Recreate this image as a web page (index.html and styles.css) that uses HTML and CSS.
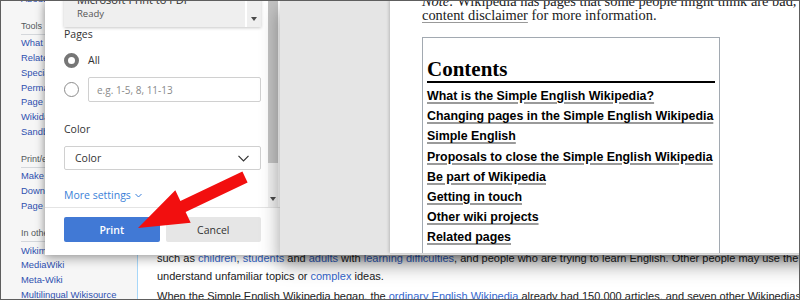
FILE: index.html
```html
<!DOCTYPE html>
<html>
<head>
  <meta charset="utf-8" />
  <title>Print - Simple English Wikipedia</title>
  <link rel="stylesheet" href="styles.css">
</head>
<body>
<div class="frame">

  <div class="wiki">
    <div class="sidebar">
      <ul class="portal-links first">
        <li><a>About Wikipedia</a></li>
      </ul>
      <div class="portal">
        <h3>Tools</h3>
        <ul class="portal-links">
          <li><a>What links here</a></li>
          <li><a>Related changes</a></li>
          <li><a>Special pages</a></li>
          <li><a>Permanent link</a></li>
          <li><a>Page information</a></li>
          <li><a>Wikidata item</a></li>
          <li><a>Sandbox</a></li>
        </ul>
      </div>
      <div class="portal">
        <h3>Print/export</h3>
        <ul class="portal-links">
          <li><a>Make a book</a></li>
          <li><a>Download as PDF</a></li>
          <li><a>Page for printing</a></li>
        </ul>
      </div>
      <div class="portal">
        <h3>In other projects</h3>
        <ul class="portal-links">
          <li><a>Wikimedia Commons</a></li>
          <li><a>MediaWiki</a></li>
          <li><a>Meta-Wiki</a></li>
          <li><a>Multilingual Wikisource</a></li>
        </ul>
      </div>
    </div>

    <div class="content">
      <p>such as <a>children</a>, <a>students</a> and <a>adults</a> with <a>learning difficulties</a>, and people who are trying to learn English. Other people may use the Simple English Wikipedia to<br>
      understand unfamiliar topics or <a>complex</a> ideas.</p>
      <p>When the Simple English Wikipedia began, the <a class="u">ordinary English Wikipedia</a> already had 150,000 articles, and seven other Wikipedias had over 15,000 articles.</p>
    </div>
  </div>

  <div class="print-dialog">
    <div class="settings">
      <div class="settings-scroll">
        <div class="settings-body">
          <div class="printer">
            <div class="printer-info">
              <div class="printer-name">Microsoft Print to PDF</div>
              <div class="printer-status">Ready</div>
            </div>
            <div class="printer-strip"></div>
            <div class="printer-scroll"><span class="arrow-down"></span></div>
          </div>

          <div class="label">Pages</div>
          <div class="radio-row">
            <span class="radio checked"></span>
            <span>All</span>
          </div>
          <div class="radio-row range">
            <span class="radio"></span>
            <input class="range-input" type="text" placeholder="e.g. 1-5, 8, 11-13">
          </div>

          <div class="label color-label">Color</div>
          <div class="select">
            <span>Color</span>
            <svg width="11" height="7" viewBox="0 0 11 7"><polyline points="0.5,0.8 5.5,5.8 10.5,0.8" fill="none" stroke="#333" stroke-width="1.2"/></svg>
          </div>

          <div class="more-settings">More settings
            <svg width="7" height="5" viewBox="0 0 7 5"><polyline points="0.5,1 3.5,4 6.5,1" fill="none" stroke="#3a7fd8" stroke-width="1"/></svg>
          </div>
        </div>
        <div class="scrollbar">
          <div class="scroll-thumb"></div>
          <div class="scroll-track"></div>
          <div class="scroll-button"><span class="arrow-down"></span></div>
        </div>
      </div>
      <div class="settings-footer">
        <button class="btn btn-print" type="button">Print</button>
        <button class="btn btn-cancel" type="button">Cancel</button>
      </div>
    </div>

    <div class="preview">
      <div class="paper">
        <p class="note"><i>Note:</i> Wikipedia has pages that some people might think are bad, see the<br>
        <span class="u">content disclaimer</span> for more information.</p>
        <div class="toc">
          <h2>Contents</h2>
          <ul>
            <li><span>What is the Simple English Wikipedia?</span></li>
            <li><span>Changing pages in the Simple English Wikipedia</span></li>
            <li><span>Simple English</span></li>
            <li><span>Proposals to close the Simple English Wikipedia</span></li>
            <li><span>Be part of Wikipedia</span></li>
            <li><span>Getting in touch</span></li>
            <li><span>Other wiki projects</span></li>
            <li><span>Related pages</span></li>
          </ul>
        </div>
      </div>
    </div>
  </div>

  <svg class="pointer" width="800" height="300" viewBox="0 0 800 300">
    <polygon points="242.4,171.6 180.4,201.1 175.3,190.3 138,228 190.7,222.8 185.6,211.9 247.6,182.4" fill="#f20f0f"/>
  </svg>

</div>
</body>
</html>
```

FILE: styles.css
```css
* {
  box-sizing: border-box;
}
html, body {
  margin: 0;
  padding: 0;
}
body {
  width: 800px;
  height: 300px;
  overflow: hidden;
  background: #fff;
}
.frame {
  position: relative;
  width: 800px;
  height: 300px;
  overflow: hidden;
  font-family: "Liberation Sans", Arial, sans-serif;
}
.frame::after {
  content: "";
  position: absolute;
  top: 0;
  left: 0;
  right: 0;
  bottom: 0;
  border: 1px solid #5e5e5e;
  pointer-events: none;
}

/* wiki page behind the dialog */
.wiki {
  display: flex;
  height: 100%;
}
.sidebar {
  width: 137px;
  flex: none;
  background: #f6f6f6;
  padding-left: 21px;
  font-size: 9.4px;
  overflow: hidden;
}
.portal-links {
  list-style: none;
  margin: 0;
  padding: 0;
}
.portal-links li {
  line-height: 14.7px;
  white-space: nowrap;
}
.portal-links a {
  color: #2f51b0;
}
.first {
  margin-top: -8.35px;
}
.portal {
  margin-top: 12.6px;
}
.portal h3 {
  margin: 0 0 1.5px 0;
  font-size: 9px;
  font-weight: normal;
  line-height: 14px;
  color: #54595d;
  padding-bottom: 1px;
  border-bottom: 1px solid #d4d7db;
  white-space: nowrap;
}
.content {
  flex: 1;
  border-left: 1px solid #a7d7f9;
  background: #fff;
  padding: 249.4px 0 0 19px;
  font-size: 11px;
  line-height: 18px;
  color: #202122;
  white-space: nowrap;
  overflow: hidden;
}
.content p {
  margin: 0 0 2px 0;
}
.content a {
  color: #3366cc;
}

/* print dialog */
.print-dialog {
  position: absolute;
  left: 45px;
  top: 0;
  right: 0;
  height: 255px;
  display: flex;
  box-shadow: 0 4px 10px rgba(0, 0, 0, 0.3), -2px 0 5px rgba(0, 0, 0, 0.12);
  font-family: "Open Sans", "Noto Sans", sans-serif;
  color: #2b2b2b;
}
.settings {
  width: 235px;
  flex: none;
  background: #fff;
  display: flex;
  flex-direction: column;
}
.settings-scroll {
  flex: 1;
  display: flex;
  min-height: 0;
}
.settings-body {
  flex: 1;
  padding: 0 7px 0 19px;
}
.printer {
  margin-top: -14px;
  height: 41px;
  background: #efefef;
  box-shadow: 0 1px 3px rgba(0, 0, 0, 0.22);
  display: flex;
}
.printer-info {
  flex: 1;
  padding: 6px 0 0 13px;
  white-space: nowrap;
}
.printer-name {
  font-size: 11px;
  line-height: 15px;
}
.printer-status {
  font-size: 9.5px;
  line-height: 13px;
  color: #555;
}
.printer-strip {
  width: 2px;
  background: #fff;
}
.printer-scroll {
  width: 14px;
  display: flex;
  align-items: flex-end;
  justify-content: center;
  padding-bottom: 6px;
}
.arrow-down {
  width: 0;
  height: 0;
  border-left: 3.5px solid transparent;
  border-right: 3.5px solid transparent;
  border-top: 4px solid #4a4a4a;
}
.label {
  font-size: 10.5px;
  line-height: 14px;
  color: #333;
}
.radio-row {
  display: flex;
  align-items: center;
  gap: 9px;
  height: 20px;
  margin-top: 9px;
  font-size: 10.5px;
  color: #333;
}
.radio-row.range {
  height: 25px;
  margin-top: 7px;
}
.radio {
  width: 15px;
  height: 15px;
  flex: none;
  border-radius: 50%;
  border: 1px solid #8c8c8c;
  background: #fff;
}
.radio.checked {
  border: 4px solid #767676;
}
.range-input {
  flex: 1;
  min-width: 0;
  height: 25px;
  margin: 0;
  border: 1px solid #d0d0d0;
  border-radius: 2px;
  padding: 0 0 0 8px;
  font-family: "Open Sans", "Noto Sans", sans-serif;
  font-size: 10px;
  color: #333;
  outline: none;
}
.range-input::placeholder {
  color: #8a8a8a;
}
.color-label {
  margin-top: 20px;
}
.select {
  margin-top: 10px;
  height: 24px;
  border: 1px solid #d0d0d0;
  border-radius: 2px;
  padding: 0 11px 0 10px;
  display: flex;
  align-items: center;
  justify-content: space-between;
  font-size: 10.5px;
  color: #333;
}
.more-settings {
  margin-top: 18px;
  font-size: 10.5px;
  line-height: 14px;
  color: #3a7fd8;
  display: flex;
  align-items: center;
  gap: 4px;
}
.scrollbar {
  width: 10px;
  margin-right: 2px;
  background: #f1f1f1;
  display: flex;
  flex-direction: column;
}
.scroll-thumb {
  height: 163px;
  background: #c3c3c3;
}
.scroll-track {
  flex: 1;
}
.scroll-button {
  height: 16px;
  display: flex;
  align-items: center;
  justify-content: center;
}
.settings-footer {
  border-top: 1px solid #e4e4e4;
  padding: 9px 19px 13px 19px;
  display: flex;
  gap: 6px;
}
.btn {
  flex: 1;
  height: 25px;
  border: none;
  border-radius: 2px;
  font-family: "Open Sans", "Noto Sans", sans-serif;
  font-size: 10.5px;
  padding: 0;
}
.btn-print {
  background: #4179d5;
  color: #fff;
  font-weight: 600;
}
.btn-cancel {
  background: #e6e6e6;
  color: #333;
}

/* preview */
.preview {
  flex: 1;
  background: #e5e5e5;
  padding-left: 110px;
  padding-bottom: 2px;
  display: flex;
  box-shadow: 0 10px 18px rgba(0, 0, 0, 0.38);
}
.paper {
  flex: 1;
  background: #fff;
  box-shadow: -1px 0 3px rgba(0, 0, 0, 0.2);
  padding-left: 32px;
  color: #202122;
  overflow: hidden;
}
.note {
  margin: -6.1px 0 0 0;
  font-family: "Liberation Serif", "Times New Roman", serif;
  font-size: 14.4px;
  line-height: 14.5px;
  white-space: nowrap;
}
.u {
  text-decoration: underline;
  text-decoration-color: #999;
  text-underline-offset: 2px;
}
.toc {
  margin-top: 14.1px;
  width: 298px;
  height: 240px;
  border: 1px solid #a2a9b1;
  padding: 19px 4px 0 4px;
}
.toc h2 {
  margin: 0;
  font-family: "Liberation Serif", "Times New Roman", serif;
  font-size: 21px;
  line-height: 24px;
  color: #000;
  border-bottom: 2px solid #000;
}
.toc ul {
  list-style: none;
  margin: 3px 0 0 0;
  padding: 0;
}
.toc li {
  font-family: "Liberation Sans", Arial, sans-serif;
  font-size: 12.4px;
  font-weight: bold;
  line-height: 20.2px;
  color: #000;
  white-space: nowrap;
}
.toc li span {
  text-decoration: underline;
  text-decoration-color: #9a9a9a;
  text-decoration-thickness: 1.5px;
  text-underline-offset: 2px;
}

.pointer {
  position: absolute;
  left: 0;
  top: 0;
  pointer-events: none;
}
```
